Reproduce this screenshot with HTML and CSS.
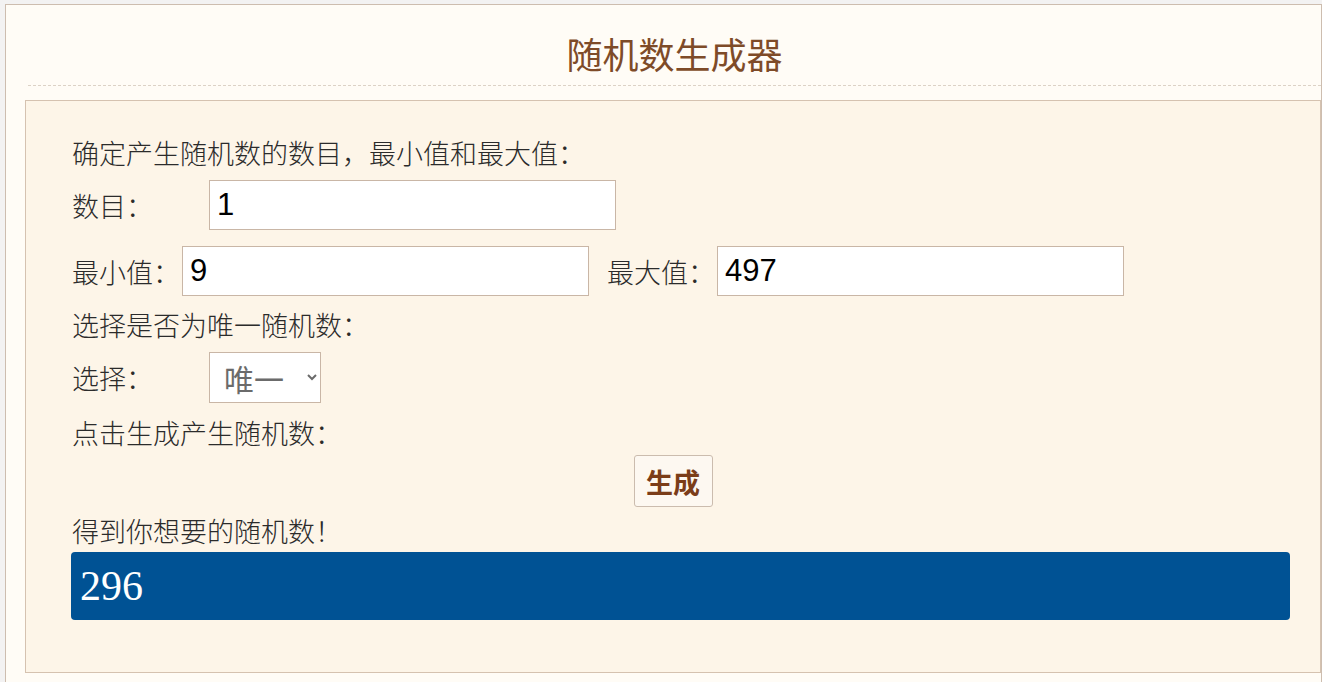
FILE: index.html
```html
<!DOCTYPE html>
<html lang="zh-CN">
<head>
<meta charset="utf-8" />
<title>随机数生成器</title>
<link rel="stylesheet" href="styles.css">
</head>
<body>
<div class="page">
	<h1 class="title">随机数生成器</h1>

	<div class="box">
		<p class="tip">确定产生随机数的数目，最小值和最大值：</p>
		<div class="row">
			<span class="label wide">数目：</span>
			<input class="field" type="text" value="1" />
		</div>
		<div class="row gap16">
			<span class="label">最小值：</span>
			<input class="field" type="text" value="9" />
			<span class="label second">最大值：</span>
			<input class="field" type="text" value="497" />
		</div>

		<p class="tip tip2">选择是否为唯一随机数：</p>
		<div class="row gap10">
			<span class="label wide">选择：</span>
			<select class="pick">
				<option>唯一</option>
				<option>不唯一</option>
			</select>
		</div>

		<p class="tip tip3">点击生成产生随机数：</p>
		<div class="btn-row">
			<button class="btn" type="button">生成</button>
		</div>

		<p class="tip tip4">得到你想要的随机数！</p>
		<div class="result">296</div>
	</div>
</div>
</body>
</html>
```

FILE: styles.css
```css
*{margin:0; padding:0; box-sizing:border-box;}
body{background:#f3f2f2; font-family:"Liberation Serif","Noto Sans CJK SC",serif; color:#2b2b2b; overflow:hidden;}

.page{margin:4px 0 0 5px; border:1px solid #cdbdaf; background:#fffcf6; padding-bottom:30px;}
.title{margin-left:22px; padding-top:19px; line-height:58px; height:81px; border-bottom:1px dashed #dcd2c6; text-align:center; font-family:"Noto Sans CJK SC",sans-serif; font-size:36px; font-weight:normal; color:#7e4b28;}

.box{margin:14px 0 0 19px; border:1px solid #d5c2b0; background:#fdf5e8; padding:35px 46px 52px;}

.tip{font-size:27px; line-height:34px; font-family:"Noto Sans CJK SC",serif; font-weight:300;}
.tip2{margin-top:12px;}
.tip3{margin-top:13px;}
.tip4{margin-top:7px;}

.row{display:flex; align-items:center; margin-top:10px;}
.gap16{margin-top:16px;}
.gap10{margin-top:10px;}
.label{width:110px; font-size:27px; font-family:"Noto Sans CJK SC",serif; font-weight:300;}
.label.wide{width:137px;}
.label.second{margin-left:18px;}

.field{width:407px; height:50px; border:1px solid #c9b6a6; background:#fff; padding:0 7px; font-family:"Liberation Sans",Arial,sans-serif; font-size:31px; color:#000; outline:none;}

.pick{width:112px; height:51px; border:1px solid #c9b6a6; border-radius:0; background:#fff; padding-left:10px; font-family:"Noto Sans CJK SC",sans-serif; font-size:30px; color:#6b6b6b;}

.btn-row{display:flex; justify-content:center; margin-top:5px;}
.btn{width:79px; height:52px; border:1px solid #cbbcae; border-radius:3px; background:#fdf8f1; font-family:"Noto Sans CJK SC",sans-serif; font-size:27px; font-weight:bold; color:#7b3d19; cursor:pointer;}

.result{width:1219px; height:68px; margin:4px 0 0 -1px; border-radius:4px; background:#005294; color:#fff; padding-left:9px; display:flex; align-items:center; font-family:"Liberation Serif",serif; font-size:42px;}
```
